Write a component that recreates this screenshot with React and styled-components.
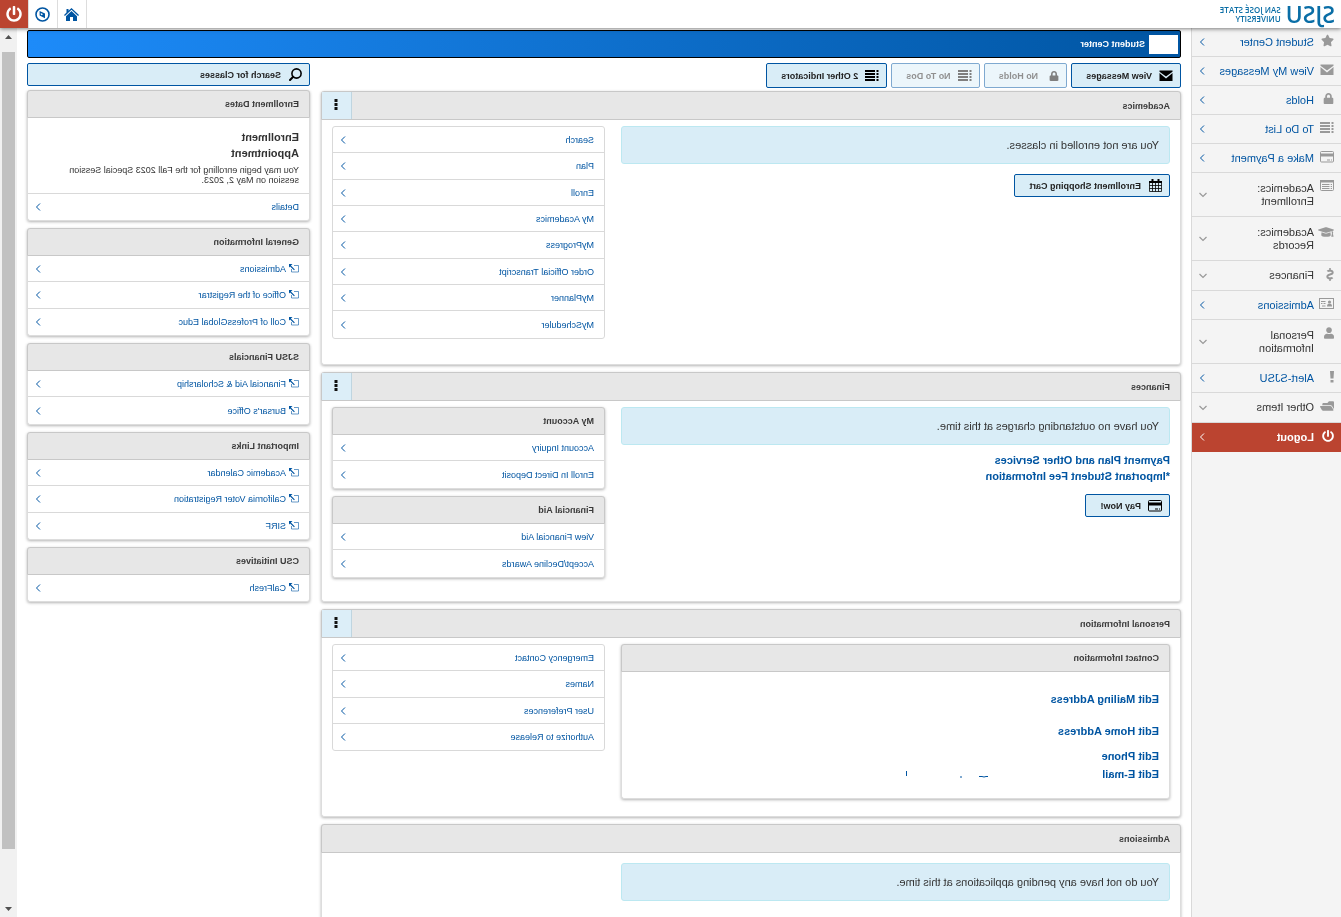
import React from "react";
import styled, { createGlobalStyle, css } from "styled-components";
import {
  FaStar,
  FaLock,
  FaGraduationCap,
  FaDollarSign,
  FaUser,
  FaFolderOpen,
  FaPowerOff,
} from "react-icons/fa";

const color = {
  link: "#0055a2",
  text: "#333",
  icon: "#999",
  rule: "#d9d9d9",
  head: "#e7e7e7",
  headEdge: "#c8c8c8",
  pale: "#d9edf7",
  red: "#bb4430",
};

const Global = createGlobalStyle`
  * { box-sizing: border-box; }
  body {
    margin: 0;
    background: #fff;
    color: ${color.text};
    font-family: "Liberation Sans", Arial, sans-serif;
    font-size: 11px;
    overflow: hidden;
  }
  h1, h2, h3, p, ul { margin: 0; padding: 0; }
  ul { list-style: none; }
  a { color: ${color.link}; text-decoration: none; }
  button { font-family: inherit; cursor: pointer; }
  svg { display: block; flex: none; }
`;

/* The whole portal is shown flipped left to right. */
const Mirror = styled.div`
  display: flex;
  flex-direction: column;
  height: 100vh;
  overflow: hidden;
  transform: scaleX(-1);
`;

const TopBar = styled.header`
  display: flex;
  justify-content: space-between;
  flex: none;
  height: 28px;
  background: #fff;
  box-shadow: 0 1px 4px rgba(0, 0, 0, 0.5);
  z-index: 1;
`;

const Brand = styled.a`
  display: flex;
  align-items: center;
  gap: 5px;
  padding-left: 6px;
  color: #0a6ea6;
  font-family: "Open Sans", "Noto Sans", sans-serif;
`;

const BrandName = styled.span`
  font-size: 23px;
  line-height: 32px;
  font-weight: 600;
`;

const BrandSub = styled.span`
  font-size: 8px;
  line-height: 9px;
  font-weight: 600;
`;

const TopActions = styled.div`
  display: flex;
`;

const TopButton = styled.button`
  display: flex;
  align-items: center;
  justify-content: center;
  width: 29px;
  padding: 0;
  border: 0;
  border-left: 1px solid #ddd;
  background: ${(p) => (p.$danger ? color.red : "#fff")};
  color: ${(p) => (p.$danger ? "#fff" : color.link)};
`;

const Shell = styled.div`
  display: flex;
  flex: 1;
  min-height: 0;
`;

const Sidebar = styled.nav`
  flex: none;
  width: 150px;
  background: #f4f4f4;
  border-right: 1px solid ${color.rule};
`;

const NavLink = styled.a`
  display: flex;
  align-items: center;
  min-height: ${(p) => (p.$size === "double" ? 44 : p.$size === "group" ? 30 : 29)}px;
  padding: 0 7px;
  border-bottom: 1px solid ${color.rule};
  color: ${(p) => (p.$size ? color.text : color.link)};
  line-height: 13px;
  ${(p) =>
    p.$danger &&
    css`
      background: ${color.red};
      border-color: ${color.red};
      color: #fff;
      font-weight: bold;
    `}
`;

const NavIcon = styled.span`
  display: flex;
  align-self: ${(p) => (p.$top ? "flex-start" : "center")};
  width: 16px;
  margin-right: 4px;
  padding: ${(p) => (p.$top ? "7px 0 0" : "0 0 3px")};
  color: ${(p) => (p.$danger ? "#fff" : color.icon)};
`;

const NavLabel = styled.span`
  flex: 1;
`;

const NavText = styled.span`
  display: block;
  max-width: ${(p) => (p.$wrap ? "70px" : "none")};
`;

const DollarIcon = styled(FaDollarSign)`
  width: 8px;
  height: 13px;
`;

const Content = styled.main`
  display: flex;
  flex-direction: column;
  gap: 5px;
  flex: 1;
  min-width: 0;
  padding: 2px 10px 0;
  overflow: hidden;
`;

const TitleBar = styled.div`
  display: flex;
  align-items: center;
  flex: none;
  gap: 4px;
  height: 28px;
  padding-left: 2px;
  border: 1px solid #000;
  border-radius: 2px;
  background: linear-gradient(to right, #0055a2, #1d8bf9);
  color: #fff;
`;

const Blank = styled.span`
  width: 29px;
  height: 19px;
  background: #fff;
`;

const Title = styled.h1`
  font-size: 9px;
`;

const Columns = styled.div`
  display: grid;
  grid-template-columns: minmax(0, 860fr) minmax(0, 283fr);
  column-gap: 11px;
  align-items: start;
`;

const Stack = styled.div`
  display: flex;
  flex-direction: column;
  gap: ${(p) => p.$gap || 7}px;
`;

const ButtonRow = styled.div`
  display: flex;
  gap: 4px;
`;

const ActionButton = styled.button`
  display: flex;
  align-items: center;
  align-self: flex-start;
  gap: 7px;
  width: ${(p) => (p.$wide ? "100%" : "auto")};
  height: ${(p) => (p.$tall ? 25 : 23)}px;
  padding: 0 14px 0 7px;
  border: 1px solid ${color.link};
  border-radius: 2px;
  background: ${color.pale};
  color: #222;
  font-size: 9px;
  font-weight: bold;
  opacity: ${(p) => (p.disabled ? 0.5 : 1)};
`;

const ButtonIcon = styled.span`
  display: flex;
  width: 14px;
  color: #000;
`;

const Panel = styled.section`
  border: 1px solid #ddd;
  border-top: 0;
  border-radius: 3px;
  background: #fff;
  box-shadow: 0 1px 3px rgba(0, 0, 0, 0.3);
`;

const PanelHead = styled.div`
  display: flex;
  align-items: stretch;
  justify-content: space-between;
  height: ${(p) => (p.$sub ? 28 : 29)}px;
  margin: 0 -1px;
  border: 1px solid ${color.headEdge};
  border-radius: 3px 3px 0 0;
  background: ${color.head};
`;

const PanelTitle = styled.h2`
  align-self: center;
  padding-left: 10px;
  color: #3a3a3a;
  font-size: 9px;
  line-height: 12px;
`;

const MenuButton = styled.button`
  width: 30px;
  padding: 0 0 3px;
  border: 0;
  border-left: 1px solid #bfd5e0;
  background: #dceef8;
  display: flex;
  align-items: center;
  justify-content: center;
`;

const PanelBody = styled.div`
  display: grid;
  grid-template-columns: minmax(0, 549fr) minmax(0, 273fr);
  align-items: start;
  column-gap: 16px;
  min-height: ${(p) => p.$min}px;
  padding: ${(p) => p.$top || 6}px 10px 0;
`;

const Notice = styled.p`
  padding: 12px 10px;
  border: 1px solid #bce8f1;
  border-radius: 3px;
  background: ${color.pale};
  line-height: 12px;
`;

const BoldLinks = styled.div`
  display: flex;
  flex-direction: column;
  margin-bottom: 3px;
  font-weight: bold;
  line-height: 16px;
`;

const LinkList = styled.ul`
  ${(p) =>
    p.$boxed &&
    css`
      border: 1px solid ${color.rule};
      border-radius: 3px;
    `}
`;

const LinkRow = styled.a`
  display: flex;
  align-items: center;
  justify-content: space-between;
  height: 100%;
  padding: 0 7px 0 10px;
  font-size: 9px;
`;

const LinkItem = styled.li`
  height: 26px;
  border-bottom: 1px solid ${color.rule};
  &:nth-child(3n + 2) {
    height: 27px;
  }
  &:last-child {
    border-bottom: 0;
  }
`;

const LinkText = styled.span`
  display: flex;
  align-items: center;
  gap: 3px;
`;

const ContactBody = styled.div`
  display: flex;
  flex-direction: column;
  align-items: flex-start;
  padding: 18px 10px 15px;
  font-weight: bold;
  line-height: 18px;
`;

const ContactLink = styled.a`
  margin-bottom: ${(p) => p.$after || 0}px;
`;

const ContactRow = styled.div`
  display: flex;
  align-items: center;
  justify-content: space-between;
  width: 254px;
`;

const Dates = styled.div`
  padding: 11px 10px 8px;
  border-bottom: 1px solid ${color.rule};
`;

const DatesTitle = styled.h3`
  width: 80px;
  font-size: 11px;
  line-height: 16px;
`;

const DatesText = styled.p`
  margin-top: 4px;
  font-size: 9px;
  line-height: 10px;
`;

const Scrollbar = styled.div`
  display: flex;
  flex: none;
  flex-direction: column;
  align-items: center;
  justify-content: space-between;
  width: 17px;
  padding: 7px 0 6px;
  background: #f1f1f1;
`;

const ScrollTrack = styled.div`
  flex: 1;
  width: 13px;
  margin: 13px 0 7px;
`;

const ScrollThumb = styled.div`
  height: 94%;
  background: #c1c1c1;
`;

const Svg = ({ w = 14, h = 12, children, ...rest }) => (
  <svg width={w} height={h} viewBox={`0 0 ${w} ${h}`} aria-hidden="true" {...rest}>
    {children}
  </svg>
);

const EnvelopeIcon = () => (
  <Svg h={11}>
    <path fill="currentColor" d="M0.5 0.5h13v1.300L7 6.6 0.5 1.800zM0.500 3l6.500 5.400L13.500 3v8h-13z" />
  </Svg>
);

const ListIcon = () => (
  <Svg h={12}>
    <path
      fill="currentColor"
      d="M0.500 0h2v2h-2zM0.500 3h2v2h-2zM0.500 6h2v2h-2zM0.500 9h2v2h-2zM4 0h10v2H4zM4 3h10v2H4zM4 6h10v2H4zM4 9h10v2H4z"
    />
  </Svg>
);

const CardIcon = () => (
  <Svg h={12}>
    <rect x="0.5" y="0.5" width="13" height="10.500" rx="1" fill="none" stroke="currentColor" />
    <path fill="currentColor" d="M1 2.6h12v3H1zM2 8.500h1v1H2zM4 8.500h3v1H4z" />
  </Svg>
);

const TableIcon = () => (
  <Svg h={11}>
    <rect x="0.5" y="0.5" width="13" height="10" rx="1" fill="none" stroke="currentColor" />
    <path
      fill="currentColor"
      d="M0 0h14v2.6H0zM2 4h1.3v1H2zM4.5 4H12v1H4.500zM2 6h1.300v1H2zM4.500 6H12v1H4.500zM2 8h1.300v1H2zM4.500 8H12v1H4.500z"
    />
  </Svg>
);

const IdIcon = () => (
  <Svg w={15} h={11}>
    <rect x="0.5" y="0.5" width="14" height="10" fill="none" stroke="currentColor" />
    <circle cx="4.500" cy="4" r="1.600" fill="currentColor" />
    <path
      fill="currentColor"
      d="M2 8.500c0-2.200 1-2.700 2.500-2.700S7 6.300 7 8.500zM8.500 3H13v1H8.500zM8.500 5h2v1h-2zM11.500 5H13v1h-1.500zM8.500 7.500H12v1H8.500z"
    />
  </Svg>
);

const UserIcon = styled(FaUser)`
  width: 10px;
  height: 12px;
`;

const ExclamationIcon = () => (
  <Svg w={4} h={12}>
    <path fill="currentColor" d="M0 0h4L3.500 7.500h-3zM0.500 9h3v2.500h-3z" />
  </Svg>
);

const CalendarIcon = () => (
  <Svg w={13} h={13}>
    <path fill="currentColor" d="M2.500 0h2v3.500h-2zM8.500 0h2v3.500h-2zM0 2h13v2H0z" />
    <path
      d="M0.500 3.500h12v9H0.500zM0.500 6.500h12M0.500 9.500h12M3.500 4v8.500M6.500 4v8.500M9.500 4v8.500"
      fill="none"
      stroke="currentColor"
      strokeWidth="0.800"
    />
  </Svg>
);

const SearchIcon = () => (
  <Svg w={13} h={13}>
    <g fill="none" stroke="currentColor">
      <circle cx="5.500" cy="5.500" r="4.600" strokeWidth="1.600" />
      <path d="M8.800 8.800l3.200 3.200" strokeWidth="2" strokeLinecap="round" />
    </g>
  </Svg>
);

const HomeIcon = () => (
  <Svg w={15} h={13}>
    <path fill="currentColor" d="M7.500 0L10.500 2.800V1h2v3.600L15 7l-.9 1-6.600-6.200L0.900 8 0 7z" />
    <path fill="currentColor" d="M7.500 3L13 8.200V13H9V9H6v4H2V8.200z" />
  </Svg>
);

const CompassIcon = () => (
  <Svg w={15} h={15}>
    <circle cx="7.500" cy="7.500" r="6.500" fill="none" stroke="currentColor" strokeWidth="1.600" />
    <path
      fill="currentColor"
      fillRule="evenodd"
      d="M10.400 4v4.600L5 11.200V6.600zM9.300 6L6.800 7.200 9 8.200z"
    />
  </Svg>
);

const ExternalIcon = () => (
  <Svg w={10} h={10}>
    <path d="M5 1.500H0.500v6.500h7V5" fill="none" stroke="currentColor" strokeWidth="0.600" />
    <path d="M6.500 0H10v3.500L8.900 2.400 5 6.300l-.8-.8 3.900-3.900z" fill="currentColor" />
  </Svg>
);

const DotsIcon = () => (
  <Svg w={4} h={11}>
    <path fill="#111" d="M0.500 0h3v3h-3zM0.500 4h3v3h-3zM0.500 8h3v3h-3z" />
  </Svg>
);

const Chevron = () => (
  <Svg w={6} h={8}>
    <path d="M1 0.500L4.500 4 1 7.500" fill="none" stroke="currentColor" strokeWidth="1" />
  </Svg>
);

const DownChevron = () => (
  <Svg w={8} h={6} color={color.icon}>
    <path d="M0.500 1L4 4.500 7.500 1" fill="none" stroke="currentColor" strokeWidth="1.200" />
  </Svg>
);

const Triangle = ({ down }) => (
  <Svg w={7} h={4}>
    <path fill="#505050" d={down ? "M0 0h7L3.500 4z" : "M0 4h7L3.500 0z"} />
  </Svg>
);

const RedactedEmail = () => (
  <Svg w={84} h={8}>
    <g fill="none" stroke={color.link}>
      <path d="M1 6.500h2q2 1 4 0h3" />
      <path d="M27 7h2" />
      <path d="M82.500 1v5" />
    </g>
  </Svg>
);

const navItems = [
  { label: "Student Center", icon: <FaStar size={13} /> },
  { label: "View My Messages", icon: <EnvelopeIcon /> },
  { label: "Holds", icon: <FaLock size={11} /> },
  { label: "To Do List", icon: <ListIcon /> },
  { label: "Make a Payment", icon: <CardIcon /> },
  { label: "Academics: Enrollment", icon: <TableIcon />, size: "double" },
  { label: "Academics: Records", icon: <FaGraduationCap size={16} />, size: "double" },
  { label: "Finances", icon: <DollarIcon />, size: "group" },
  { label: "Admissions", icon: <IdIcon /> },
  { label: "Personal Information", icon: <UserIcon />, size: "double" },
  { label: "Alert-SJSU", icon: <ExclamationIcon /> },
  { label: "Other Items", icon: <FaFolderOpen size={14} />, size: "group" },
  { label: "Logout", icon: <FaPowerOff size={12} />, danger: true },
];

const Nav = () => (
  <Sidebar>
    {navItems.map(({ label, icon, size, danger }) => (
      <NavLink key={label} href="#" $size={size} $danger={danger}>
        <NavIcon $top={size === "double"} $danger={danger}>
          {icon}
        </NavIcon>
        <NavLabel>
          <NavText $wrap={size === "double"}>{label}</NavText>
        </NavLabel>
        {size ? <DownChevron /> : <Chevron />}
      </NavLink>
    ))}
  </Sidebar>
);

const Links = ({ items, boxed, external }) => (
  <LinkList $boxed={boxed}>
    {items.map((item) => (
      <LinkItem key={item}>
        <LinkRow href="#">
          <LinkText>
            {external && <ExternalIcon />}
            {item}
          </LinkText>
          <Chevron />
        </LinkRow>
      </LinkItem>
    ))}
  </LinkList>
);

const Section = ({ title, menu, sub, children }) => (
  <Panel>
    <PanelHead $sub={sub}>
      <PanelTitle>{title}</PanelTitle>
      {menu && (
        <MenuButton aria-label={`${title} menu`}>
          <DotsIcon />
        </MenuButton>
      )}
    </PanelHead>
    {children}
  </Panel>
);

const Action = ({ icon, children, ...rest }) => (
  <ActionButton {...rest}>
    <ButtonIcon>{icon}</ButtonIcon>
    {children}
  </ActionButton>
);

export default function App() {
  return (
    <>
      <Global />
      <Mirror>
        <TopBar>
          <Brand href="#">
            <BrandName>SJSU</BrandName>
            <BrandSub>
              SAN JOSÉ STATE
              <br />
              UNIVERSITY
            </BrandSub>
          </Brand>
          <TopActions>
            <TopButton aria-label="Home">
              <HomeIcon />
            </TopButton>
            <TopButton aria-label="Navigator">
              <CompassIcon />
            </TopButton>
            <TopButton aria-label="Sign out" $danger>
              <FaPowerOff size={16} />
            </TopButton>
          </TopActions>
        </TopBar>
        <Shell>
          <Nav />
          <Content>
            <TitleBar>
              <Blank />
              <Title>Student Center</Title>
            </TitleBar>
            <Columns>
              <Stack>
                <Stack $gap={3}>
                  <ButtonRow>
                    <Action $tall icon={<EnvelopeIcon />}>View Messages</Action>
                    <Action $tall disabled icon={<FaLock size={10} />}>No Holds</Action>
                    <Action $tall disabled icon={<ListIcon />}>No To Dos</Action>
                    <Action $tall icon={<ListIcon />}>2 Other Indicators</Action>
                  </ButtonRow>
                  <Section title="Academics" menu>
                    <PanelBody $min={244}>
                      <Stack $gap={10}>
                        <Notice>You are not enrolled in classes.</Notice>
                        <Action icon={<CalendarIcon />}>Enrollment Shopping Cart</Action>
                      </Stack>
                      <Links
                        boxed
                        items={[
                          "Search",
                          "Plan",
                          "Enroll",
                          "My Academics",
                          "MyProgress",
                          "Order Official Transcript",
                          "MyPlanner",
                          "MyScheduler",
                        ]}
                      />
                    </PanelBody>
                  </Section>
                </Stack>
                <Section title="Finances" menu>
                  <PanelBody $min={200}>
                    <Stack>
                      <Notice>You have no outstanding charges at this time.</Notice>
                      <BoldLinks>
                        <a href="#">Payment Plan and Other Services</a>
                        <a href="#">*Important Student Fee Information</a>
                      </BoldLinks>
                      <Action icon={<CardIcon />}>Pay Now!</Action>
                    </Stack>
                    <Stack>
                      <Section sub title="My Account">
                        <Links items={["Account Inquiry", "Enroll In Direct Deposit"]} />
                      </Section>
                      <Section sub title="Financial Aid">
                        <Links items={["View Financial Aid", "Accept/Decline Awards"]} />
                      </Section>
                    </Stack>
                  </PanelBody>
                </Section>
                <Section title="Personal Information" menu>
                  <PanelBody $min={178}>
                    <Section sub title="Contact Information">
                      <ContactBody>
                        <ContactLink href="#" $after={14}>Edit Mailing Address</ContactLink>
                        <ContactLink href="#" $after={7}>Edit Home Address</ContactLink>
                        <ContactLink href="#">Edit Phone</ContactLink>
                        <ContactRow>
                          <ContactLink href="#">Edit E-mail</ContactLink>
                          <RedactedEmail />
                        </ContactRow>
                      </ContactBody>
                    </Section>
                    <Links
                      boxed
                      items={["Emergency Contact", "Names", "User Preferences", "Authorize to Release"]}
                    />
                  </PanelBody>
                </Section>
                <Section title="Admissions">
                  <PanelBody $min={120} $top={10}>
                    <Notice>You do not have any pending applications at this time.</Notice>
                  </PanelBody>
                </Section>
              </Stack>
              <Stack $gap={4}>
                <Action $wide icon={<SearchIcon />}>Search for Classes</Action>
                <Stack>
                  <Section sub title="Enrollment Dates">
                    <Dates>
                      <DatesTitle>Enrollment Appointment</DatesTitle>
                      <DatesText>
                        You may begin enrolling for the Fall 2023 Special Session session on May 2,
                        2023.
                      </DatesText>
                    </Dates>
                    <Links items={["Details"]} />
                  </Section>
                  <Section sub title="General Information">
                    <Links
                      external
                      items={["Admissions", "Office of the Registrar", "Coll of ProfessGlobal Educ"]}
                    />
                  </Section>
                  <Section sub title="SJSU Financials">
                    <Links external items={["Financial Aid & Scholarship", "Bursar's Office"]} />
                  </Section>
                  <Section sub title="Important Links">
                    <Links
                      external
                      items={["Academic Calendar", "California Voter Registration", "SIRF"]}
                    />
                  </Section>
                  <Section sub title="CSU Initiatives">
                    <Links external items={["CalFresh"]} />
                  </Section>
                </Stack>
              </Stack>
            </Columns>
          </Content>
          <Scrollbar aria-hidden="true">
            <Triangle />
            <ScrollTrack>
              <ScrollThumb />
            </ScrollTrack>
            <Triangle down />
          </Scrollbar>
        </Shell>
      </Mirror>
    </>
  );
}
